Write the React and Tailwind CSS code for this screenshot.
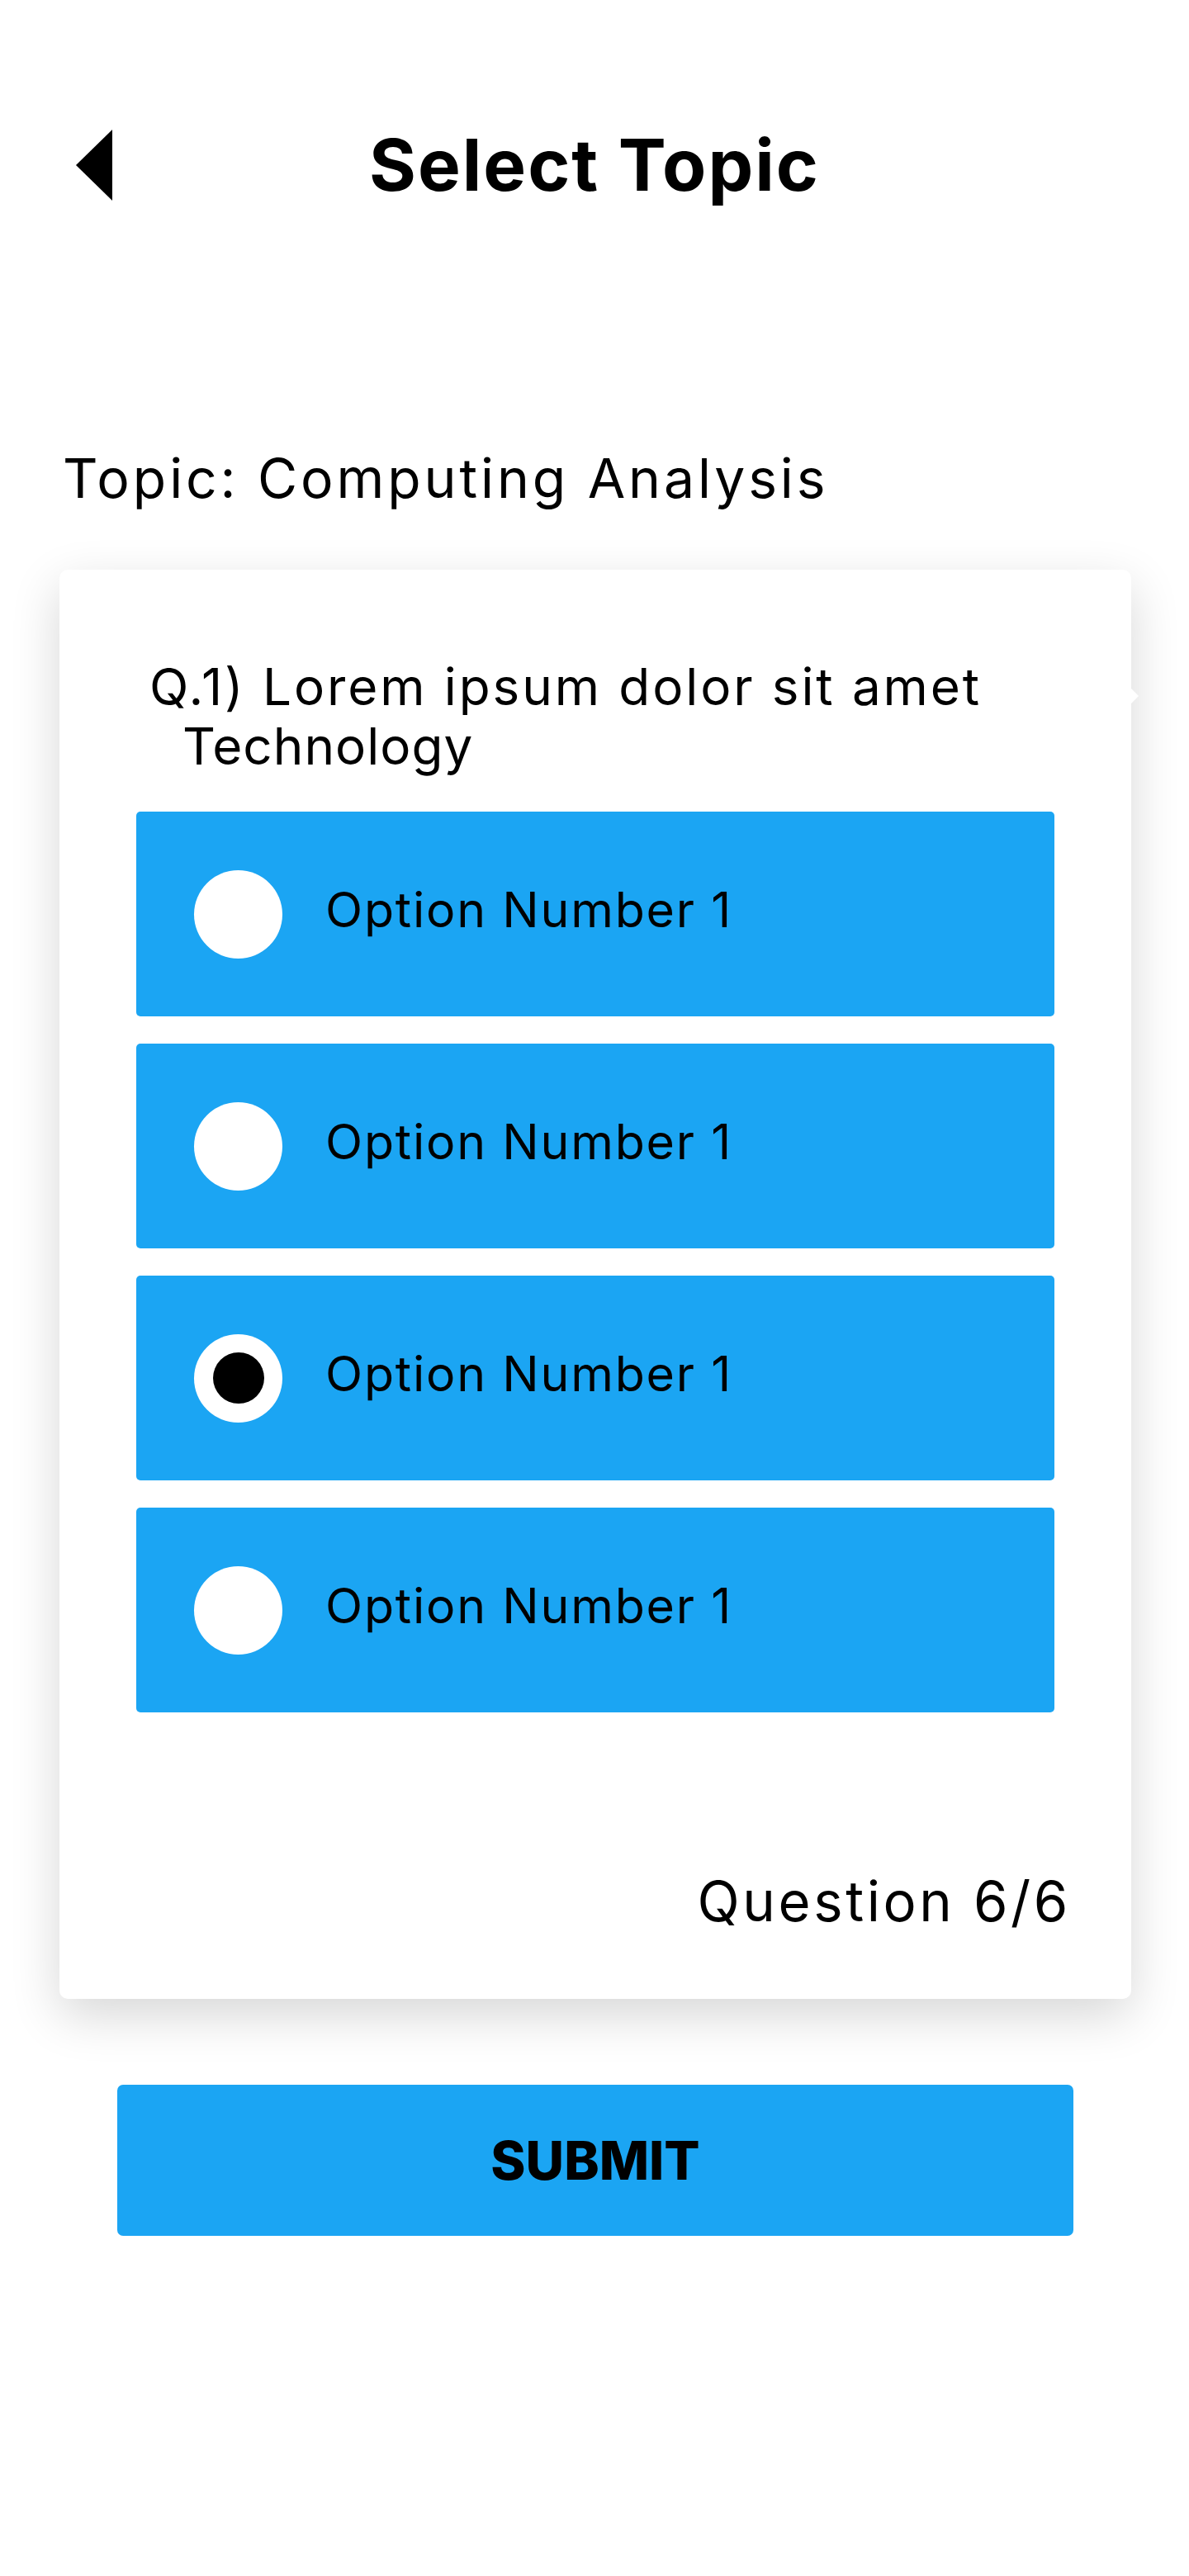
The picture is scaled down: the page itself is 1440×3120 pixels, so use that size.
import React from "react";

function Option({ selected }) {
  return (
    <div className="flex h-[248px] items-center rounded-[5px] bg-[#1ba5f3] pl-[70px]">
      <div className="flex h-[107px] w-[107px] shrink-0 items-center justify-center rounded-full bg-white">
        {selected && <div className="h-[62px] w-[62px] rounded-full bg-black" />}
      </div>
      <span className="mb-[10px] ml-[52px] text-[59px] leading-[80px] tracking-[1.8px] text-black">Option Number 1</span>
    </div>
  );
}

export default function App() {
  return (
    <div className="min-h-[3120px] w-[1440px] bg-white font-['Inter',sans-serif] text-black">
      {/* Header */}
      <div className="mt-[140px] grid h-[120px] grid-cols-[1fr_auto_1fr] items-center">
        <div className="flex items-center pl-[92px]">
          <svg width="44" height="86" viewBox="0 0 44 86">
            <polygon points="44,0 44,86 0,43" fill="#000" />
          </svg>
        </div>
        <h1 className="text-[87px] font-bold leading-[120px] tracking-[2px]">Select Topic</h1>
        <div />
      </div>

      {/* Topic */}
      <div className="mt-[279px] pl-[76px] text-[66px] leading-[80px] tracking-[3.9px]">Topic: Computing Analysis</div>

      {/* Card */}
      <div className="relative ml-[72px] mr-[70px] mt-[71px] rounded-[10px] bg-white pb-[78px] pl-[93px] pr-[93px] pt-[106px] shadow-[0_20px_60px_rgba(0,0,0,0.16)]">
        <div className="absolute right-[-9px] top-[144px] h-0 w-0 border-y-[9px] border-l-[9px] border-y-transparent border-l-white" />
        <div className="text-[62px] leading-[72px]">
          <div className="pl-[16px] tracking-[2.9px]">Q.1) Lorem ipsum dolor sit amet</div>
          <div className="pl-[56px] tracking-[1px]">Technology</div>
        </div>
        <div className="mt-[43px] flex flex-col gap-[33px]">
          <Option />
          <Option />
          <Option selected />
          <Option />
        </div>
        <div className="-mr-[20px] mt-[189px] text-right text-[67px] leading-[80px] tracking-[3.6px]">Question 6/6</div>
      </div>

      {/* Submit */}
      <div className="ml-[142px] mt-[104px] flex h-[183px] w-[1158px] items-center justify-center rounded-[7px] bg-[#1ba5f3]">
        <span className="text-[64px] font-extrabold leading-[80px] text-black">SUBMIT</span>
      </div>
    </div>
  );
}
